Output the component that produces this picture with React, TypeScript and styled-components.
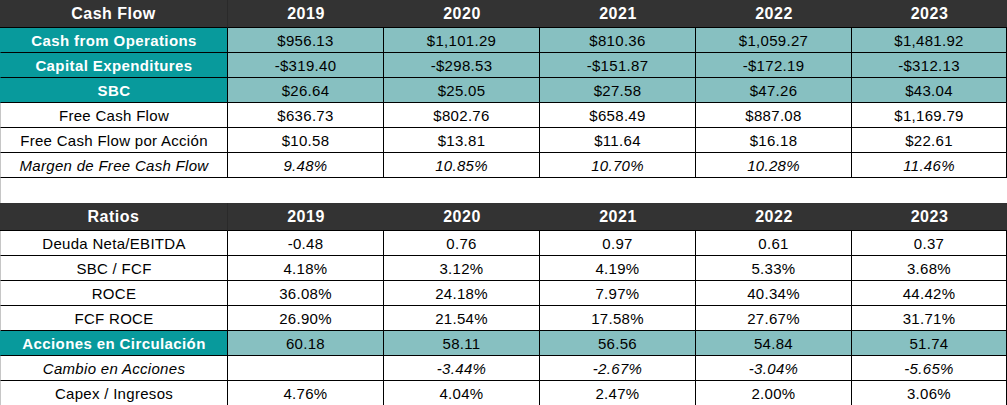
import styled, { createGlobalStyle } from "styled-components";

const GlobalStyle = createGlobalStyle`
  html, body {
    margin: 0;
    padding: 0;
    background: #ffffff;
    overflow: hidden;
  }
  body {
    font-family: "Liberation Sans", Arial, sans-serif;
  }
`;

const YEARS = ["2019", "2020", "2021", "2022", "2023"];
const COL_WIDTHS = [228, 156, 156, 156, 156, 155];

type Row = {
  label: string;
  values: string[];
  highlight?: boolean;
  italic?: boolean;
};

const cashFlowRows: Row[] = [
  { label: "Cash from Operations", values: ["$956.13", "$1,101.29", "$810.36", "$1,059.27", "$1,481.92"], highlight: true },
  { label: "Capital Expenditures", values: ["-$319.40", "-$298.53", "-$151.87", "-$172.19", "-$312.13"], highlight: true },
  { label: "SBC", values: ["$26.64", "$25.05", "$27.58", "$47.26", "$43.04"], highlight: true },
  { label: "Free Cash Flow", values: ["$636.73", "$802.76", "$658.49", "$887.08", "$1,169.79"] },
  { label: "Free Cash Flow por Acción", values: ["$10.58", "$13.81", "$11.64", "$16.18", "$22.61"] },
  { label: "Margen de Free Cash Flow", values: ["9.48%", "10.85%", "10.70%", "10.28%", "11.46%"], italic: true },
];

const ratioRows: Row[] = [
  { label: "Deuda Neta/EBITDA", values: ["-0.48", "0.76", "0.97", "0.61", "0.37"] },
  { label: "SBC / FCF", values: ["4.18%", "3.12%", "4.19%", "5.33%", "3.68%"] },
  { label: "ROCE", values: ["36.08%", "24.18%", "7.97%", "40.34%", "44.42%"] },
  { label: "FCF ROCE", values: ["26.90%", "21.54%", "17.58%", "27.67%", "31.71%"] },
  { label: "Acciones en Circulación", values: ["60.18", "58.11", "56.56", "54.84", "51.74"], highlight: true },
  { label: "Cambio en Acciones", values: ["", "-3.44%", "-2.67%", "-3.04%", "-5.65%"], italic: true },
  { label: "Capex / Ingresos", values: ["4.76%", "4.04%", "2.47%", "2.00%", "3.06%"] },
];

const Page = styled.div`
  width: 1007px;
  height: 405px;
  overflow: hidden;
`;

const Table = styled.table`
  width: 1007px;
  border-collapse: separate;
  border-spacing: 0;
  table-layout: fixed;
`;

const Col = styled.col<{ $w: number }>`
  width: ${({ $w }) => $w}px;
`;

const HeadCell = styled.th<{ $first?: boolean }>`
  height: 27px;
  padding: 0;
  background: #333333;
  color: #ffffff;
  font-size: 16px;
  font-weight: 700;
  letter-spacing: 0.5px;
  text-align: center;
  vertical-align: middle;
  border-bottom: 1px solid #000000;
  border-right: ${({ $first }) => ($first ? "1px solid #2a2a2a" : "none")};
`;

const LabelCell = styled.td<{ $highlight?: boolean; $italic?: boolean }>`
  height: 24px;
  padding: 0;
  text-align: center;
  vertical-align: middle;
  white-space: nowrap;
  font-size: 15px;
  font-weight: ${({ $highlight }) => ($highlight ? 700 : 400)};
  font-style: ${({ $italic }) => ($italic ? "italic" : "normal")};
  letter-spacing: ${({ $highlight }) => ($highlight ? "0.4px" : "0.3px")};
  color: ${({ $highlight }) => ($highlight ? "#ffffff" : "#000000")};
  background: ${({ $highlight }) => ($highlight ? "#089a9c" : "#ffffff")};
  border-left: 1px solid ${({ $highlight }) => ($highlight ? "#089a9c" : "#c6c6c6")};
  border-right: 1px solid #000000;
  border-bottom: 1px solid #000000;
`;

const ValueCell = styled.td<{ $highlight?: boolean; $italic?: boolean }>`
  height: 24px;
  padding: 0;
  text-align: center;
  vertical-align: middle;
  white-space: nowrap;
  font-size: 15px;
  letter-spacing: 0.3px;
  font-style: ${({ $italic }) => ($italic ? "italic" : "normal")};
  color: #000000;
  background: ${({ $highlight }) => ($highlight ? "#87c0c1" : "#ffffff")};
  border-right: 1px solid #000000;
  border-bottom: 1px solid #000000;
`;

const Spacer = styled.div`
  height: 25px;
  border-left: 1px solid #c6c6c6;
  box-sizing: border-box;
`;

function Sheet({ title, rows }: { title: string; rows: Row[] }) {
  return (
    <Table>
      <colgroup>
        {COL_WIDTHS.map((w, i) => (
          <Col key={i} $w={w} />
        ))}
      </colgroup>
      <thead>
        <tr>
          <HeadCell $first>{title}</HeadCell>
          {YEARS.map((y) => (
            <HeadCell key={y}>{y}</HeadCell>
          ))}
        </tr>
      </thead>
      <tbody>
        {rows.map((r) => (
          <tr key={r.label}>
            <LabelCell $highlight={r.highlight} $italic={r.italic}>
              {r.label}
            </LabelCell>
            {r.values.map((v, i) => (
              <ValueCell key={i} $highlight={r.highlight} $italic={r.italic}>
                {v}
              </ValueCell>
            ))}
          </tr>
        ))}
      </tbody>
    </Table>
  );
}

export default function App() {
  return (
    <Page>
      <GlobalStyle />
      <Sheet title="Cash Flow" rows={cashFlowRows} />
      <Spacer />
      <Sheet title="Ratios" rows={ratioRows} />
    </Page>
  );
}
